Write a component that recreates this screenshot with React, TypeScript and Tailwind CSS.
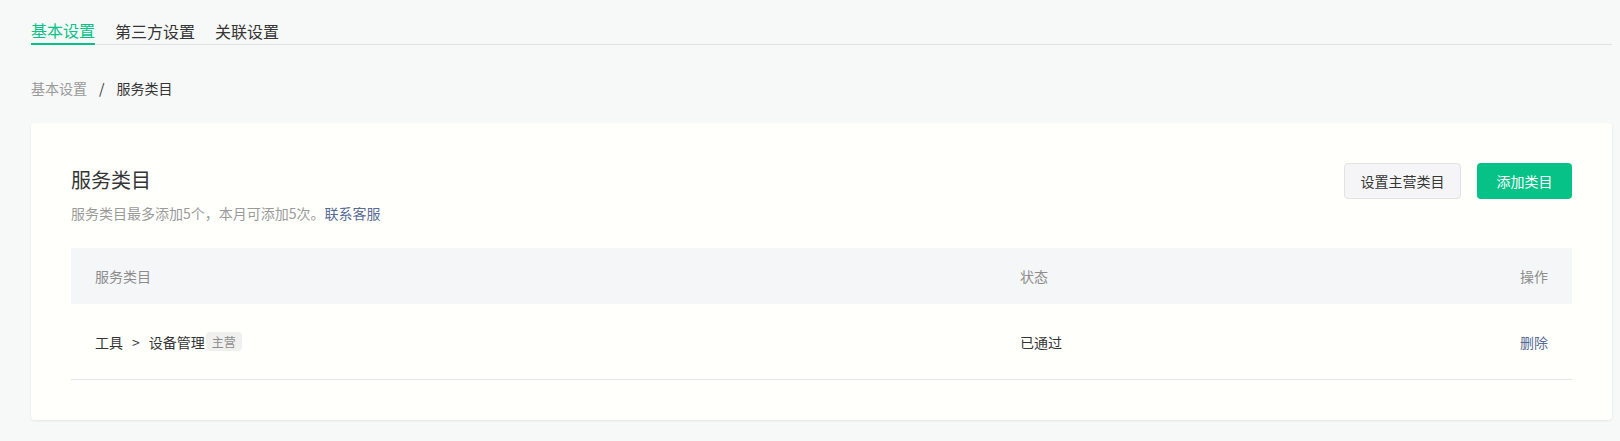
import React, { useState } from 'react';

const tabs = ['基本设置', '第三方设置', '关联设置'];

const App: React.FC = () => {
  const [activeTab, setActiveTab] = useState(0);

  return (
    <div
      className="min-h-[441px] bg-[#f7f8f8] pl-[31px] pr-[8px] pt-[17px] text-[#353535]"
      style={{ fontFamily: '"Noto Sans CJK SC", "Noto Sans", sans-serif' }}
    >
      {/* 顶部标签 */}
      <nav className="flex gap-5 border-b border-[#e2e2e2]">
        {tabs.map((t, i) => (
          <button
            key={t}
            onClick={() => setActiveTab(i)}
            className={`-mb-px h-[28px] text-base leading-6 ${
              i === activeTab ? 'border-b-2 border-[#07c287] text-[#07c287]' : 'text-[#353535]'
            }`}
          >
            {t}
          </button>
        ))}
      </nav>

      {/* 面包屑 */}
      <div className="mt-[32px] flex items-center text-sm leading-[22px]">
        <span className="text-[#9a9a9a]">基本设置</span>
        <span className="mx-[12px] text-[#353535]">/</span>
        <span className="text-[#353535]">服务类目</span>
      </div>

      <section className="mt-[24px] rounded bg-[#fffffc] px-[40px] pt-[40px] pb-[40px] shadow-[0_1px_3px_rgba(0,0,0,0.08)]">
        <div className="flex items-start justify-between">
          <div>
            <h2 className="text-xl leading-[34px] text-[#353535]">服务类目</h2>
            <p className="mt-[6px] text-sm leading-5 text-[#9a9a9a]">
              服务类目最多添加5个，本月可添加5次。
              <a className="text-[#576b95]">联系客服</a>
            </p>
          </div>
          <div className="flex gap-4">
            <button className="h-[36px] w-[117px] rounded border border-[#e2e2e2] bg-[#f5f5f7] text-sm text-[#353535]">
              设置主营类目
            </button>
            <button className="h-[36px] w-[95px] rounded bg-[#07c287] text-sm text-white">添加类目</button>
          </div>
        </div>

        <div className="mt-[25px] text-sm">
          <div className="flex h-[56px] items-center bg-[#f5f6f7] px-6 text-[#8c8c8c]">
            <div className="w-[925px]">服务类目</div>
            <div className="flex-1">状态</div>
            <div className="text-right">操作</div>
          </div>
          <div className="flex h-[76px] items-center border-b border-[#e5e5e5] px-6">
            <div className="flex w-[925px] items-center">
              <span>工具</span>
              <span className="mx-[9px]">&gt;</span>
              <span>设备管理</span>
              <span className="ml-px rounded-sm bg-[#f0f0ee] px-[6px] text-xs leading-[19px] text-[#8c8c8c]">主营</span>
            </div>
            <div className="flex-1">已通过</div>
            <a className="text-right text-[#576b95]">删除</a>
          </div>
        </div>
      </section>
    </div>
  );
};

export default App;
